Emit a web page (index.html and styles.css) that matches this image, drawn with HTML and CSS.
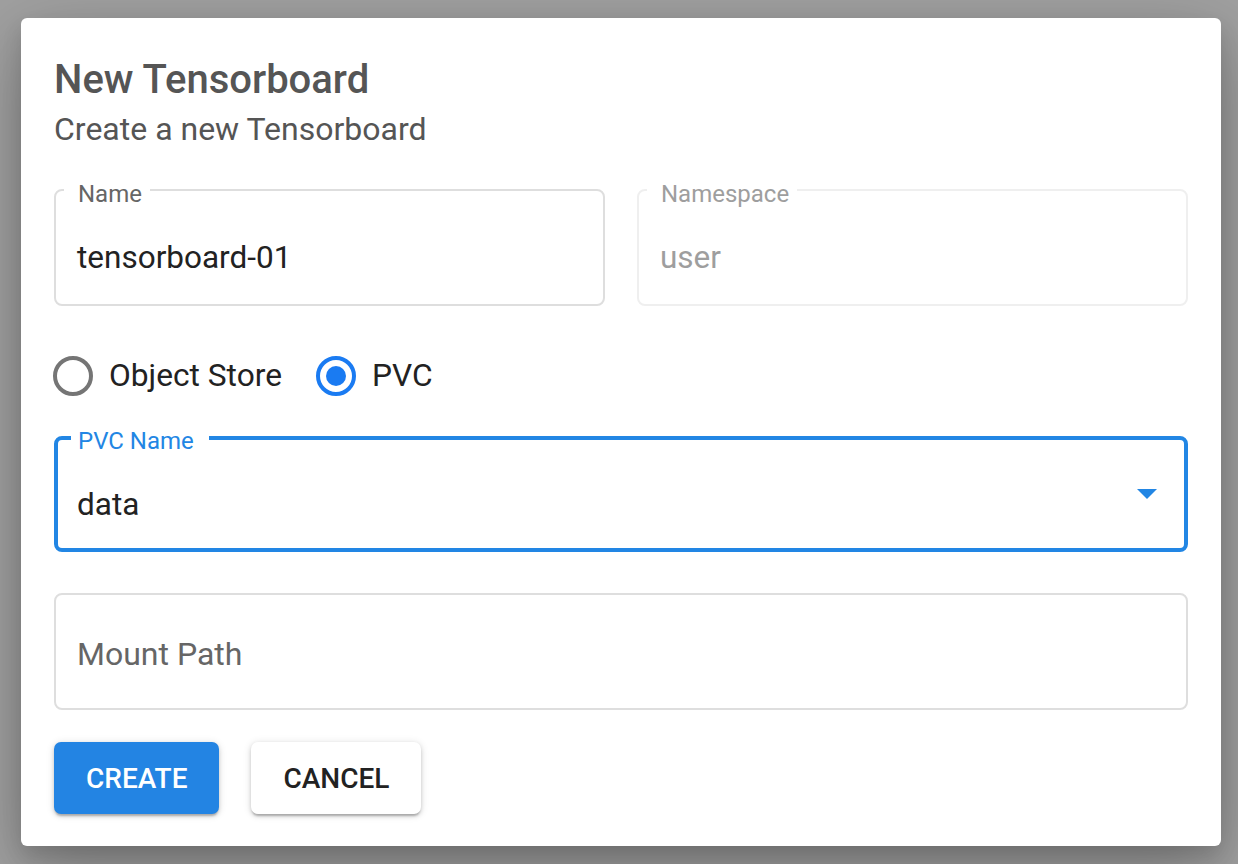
FILE: index.html
```html
<!DOCTYPE html>
<html lang="en">
<head>
<meta charset="utf-8">
<title>New Tensorboard</title>
<link rel="stylesheet" href="styles.css">
</head>
<body>
<div class="dialog">
  <h1 class="title">New Tensorboard</h1>
  <p class="subtitle">Create a new Tensorboard</p>

  <div class="row">
    <div class="field">
      <span class="label">Name</span>
      <div class="value">tensorboard-01</div>
    </div>
    <div class="field field-disabled">
      <span class="label">Namespace</span>
      <div class="value">user</div>
    </div>
  </div>

  <div class="radios">
    <label class="radio">
      <span class="radio-circle"></span>
      <span class="radio-text">Object Store</span>
    </label>
    <label class="radio radio-checked">
      <span class="radio-circle"><span class="radio-dot"></span></span>
      <span class="radio-text">PVC</span>
    </label>
  </div>

  <div class="field field-focused field-select">
    <span class="label">PVC Name</span>
    <div class="value">data</div>
    <svg class="arrow" width="20" height="10" viewBox="0 0 20 10"><path d="M0 0 L20 0 L10 10 Z" fill="#2286e4"/></svg>
  </div>

  <div class="field field-empty">
    <div class="placeholder">Mount Path</div>
  </div>

  <div class="actions">
    <button class="btn btn-primary">CREATE</button>
    <button class="btn btn-secondary">CANCEL</button>
  </div>
</div>
</body>
</html>
```

FILE: styles.css
```css
* { box-sizing: border-box; }
html, body { margin: 0; padding: 0; }
body {
  background: #a0a0a0;
  font-family: Roboto, "Noto Sans", "Liberation Sans", sans-serif;
  width: 1238px;
  height: 864px;
  padding: 18px 17px 18px 21px;
  overflow: hidden;
}
.dialog {
  width: 1200px;
  height: 828px;
  background: #fff;
  border-radius: 6px;
  padding: 38px 33px 32px 33px;
  box-shadow: 0 22px 70px rgba(0,0,0,0.28), 0 10px 20px rgba(0,0,0,0.12);
  display: flex;
  flex-direction: column;
}
.title {
  margin: 0;
  font-size: 40px;
  line-height: 48px;
  font-weight: 500;
  color: #555555;
}
.subtitle {
  margin: 5px 0 0 0;
  font-size: 32px;
  line-height: 40px;
  font-weight: 400;
  color: #555555;
}
.row {
  margin-top: 40px;
  display: flex;
  gap: 32px;
}
.row .field { flex: 1; }
.field {
  position: relative;
  height: 117px;
  border: 2px solid #dedede;
  border-radius: 8px;
  padding: 47px 22px 0 21px;
}
.label {
  position: absolute;
  top: -9px;
  left: 8px;
  padding: 0 8px 0 14px;
  background: #fff;
  font-size: 24px;
  line-height: 24px;
  color: #666666;
}
.value {
  font-size: 31.5px;
  line-height: 40px;
  color: #222222;
}
.field-disabled { border-color: #efefef; }
.field-disabled .label { color: #9e9e9e; }
.field-disabled .value { color: #9e9e9e; }

.radios {
  margin-top: 50px;
  display: flex;
  align-items: center;
  height: 40px;
}
.radio {
  display: flex;
  align-items: center;
  margin-right: 35px;
}
.radio-circle {
  width: 40px;
  height: 40px;
  border: 4px solid #757575;
  border-radius: 50%;
  display: flex;
  align-items: center;
  justify-content: center;
  margin-left: -1px;
}
.radio-checked .radio-circle { border-color: #1a7bf2; }
.radio-dot {
  width: 20px;
  height: 20px;
  border-radius: 50%;
  background: #1a7bf2;
}
.radio-text {
  margin-left: 16px;
  font-size: 31.7px;
  line-height: 40px;
  color: #222222;
}

.field-focused {
  margin-top: 40px;
  height: 116px;
  border: 4px solid #2286e4;
  padding: 45px 20px 0 19px;
}
.field-focused .label {
  top: -11px;
  left: 13px;
  padding: 0 15px 0 7px;
  color: #2286e4;
}
.arrow {
  position: absolute;
  right: 27px;
  top: 49px;
}
.field-empty {
  margin-top: 41px;
  padding-top: 39px;
}
.placeholder {
  font-size: 32px;
  line-height: 40px;
  color: #666666;
}

.actions {
  margin-top: 32px;
  display: flex;
  gap: 32px;
}
.btn {
  height: 72px;
  padding: 0 32px;
  border: none;
  border-radius: 7px;
  font-family: Roboto, "Noto Sans", "Liberation Sans", sans-serif;
  font-size: 28px;
  font-weight: 500;
  letter-spacing: 0;
}
.btn-primary {
  background: #2384e3;
  color: #fff;
  box-shadow: 0 3px 2px -1px rgba(0,0,0,0.2), 0 2px 4px rgba(0,0,0,0.14), 0 1px 8px rgba(0,0,0,0.12);
}
.btn-secondary {
  background: #fff;
  color: #222222;
  box-shadow: 0 3px 2px -1px rgba(0,0,0,0.2), 0 2px 4px rgba(0,0,0,0.14), 0 1px 8px rgba(0,0,0,0.12);
}
```
